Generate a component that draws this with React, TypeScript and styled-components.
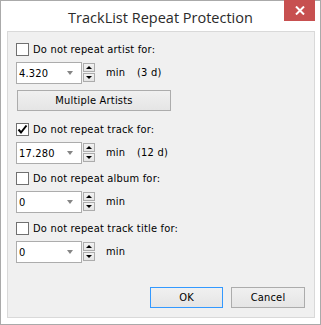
import React from "react";
import styled, { createGlobalStyle } from "styled-components";

const Global = createGlobalStyle`
  html, body { margin: 0; padding: 0; background: #ffffff; }
  * { box-sizing: border-box; }
`;

const UI_FONT = `"DejaVu Sans Condensed", "Liberation Sans", Arial, sans-serif`;

const Window = styled.div`
  width: 321px;
  height: 325px;
  border: 1px solid #aaaaaa;
  background: #ffffff;
  display: flex;
  flex-direction: column;
`;

const TitleBar = styled.div`
  height: 30px;
  display: grid;
  grid-template-columns: 1fr auto 1fr;
  align-items: start;
`;

const Title = styled.div`
  grid-column: 2;
  font-family: "Open Sans", "Noto Sans", sans-serif;
  font-size: 14.5px;
  color: #2b2b2b;
  line-height: 20px;
  padding-top: 7px;
  white-space: nowrap;
`;

const CloseButton = styled.div`
  grid-column: 3;
  justify-self: end;
  margin-top: -1px;
  margin-right: 5px;
  width: 31px;
  height: 21px;
  background: #c75050;
  display: flex;
  align-items: center;
  justify-content: center;
`;

const Client = styled.div`
  margin: 0 5px 6px 6px;
  flex: 1;
  border: 1px solid #d9d9d9;
  background: #f0f0f0;
  display: flex;
  flex-direction: column;
  padding: 11px 0 0 8px;
  font-family: ${UI_FONT};
  font-size: 11px;
  letter-spacing: 0.2px;
  color: #000;
`;

const CheckRow = styled.label<{ $top: number }>`
  display: flex;
  align-items: center;
  height: 13px;
  margin-top: ${(p) => p.$top}px;
  gap: 4px;
  white-space: nowrap;
`;

const Box = styled.span`
  width: 13px;
  height: 13px;
  border: 1px solid #707070;
  background: #ffffff;
  display: flex;
  align-items: center;
  justify-content: center;
  flex: none;
`;

const ValueRow = styled.div`
  display: flex;
  align-items: flex-start;
  margin-top: 6px;
  height: 22px;
`;

const Combo = styled.div`
  width: 66px;
  height: 22px;
  border: 1px solid #acacac;
  background: #ffffff;
  display: flex;
  align-items: center;
  padding-left: 2px;
`;

const ComboText = styled.span`
  flex: 1;
`;

const Arrow = styled.span`
  width: 0;
  height: 0;
  border-left: 3px solid transparent;
  border-right: 3px solid transparent;
  border-top: 4px solid #858585;
  margin-right: 8px;
`;

const Spin = styled.div`
  margin-left: 1px;
  margin-top: 1px;
  display: flex;
  flex-direction: column;
  gap: 1px;
`;

const SpinBtn = styled.div`
  width: 12px;
  height: 9px;
  border: 1px solid #acacac;
  background: linear-gradient(#f2f2f2, #e4e4e4);
  display: flex;
  align-items: center;
  justify-content: center;
`;

const Tri = styled.span<{ $up?: boolean }>`
  width: 0;
  height: 0;
  border-left: 3px solid transparent;
  border-right: 3px solid transparent;
  ${(p) => (p.$up ? "border-bottom: 3px solid #000;" : "border-top: 3px solid #000;")}
`;

const Unit = styled.span`
  margin-left: 11px;
  line-height: 22px;
  width: 31px;
`;

const Extra = styled.span`
  line-height: 22px;
`;

const PushButton = styled.div<{ $default?: boolean; $w: number }>`
  width: ${(p) => p.$w}px;
  height: 21px;
  border: 1px solid ${(p) => (p.$default ? "#3399ff" : "#acacac")};
  background: linear-gradient(#f0f0f0, #e5e5e5);
  display: flex;
  align-items: center;
  justify-content: center;
  white-space: nowrap;
`;

const ArtistsButton = styled.div`
  margin-top: 6px;
  margin-left: 1px;
`;

const Footer = styled.div`
  margin-top: auto;
  margin-bottom: 9px;
  margin-right: 9px;
  display: flex;
  justify-content: flex-end;
  gap: 8px;
`;

function Check({ checked }: { checked?: boolean }) {
  return (
    <Box>
      {checked && (
        <svg width="11" height="11" viewBox="0 0 11 11">
          <path d="M1.5 5.5 L4 8.5 L9.5 1.5" fill="none" stroke="#000" strokeWidth="2" />
        </svg>
      )}
    </Box>
  );
}

function Field({ value, extra }: { value: string; extra?: string }) {
  return (
    <ValueRow>
      <Combo>
        <ComboText>{value}</ComboText>
        <Arrow />
      </Combo>
      <Spin>
        <SpinBtn>
          <Tri $up />
        </SpinBtn>
        <SpinBtn>
          <Tri />
        </SpinBtn>
      </Spin>
      <Unit>min</Unit>
      {extra && <Extra>{extra}</Extra>}
    </ValueRow>
  );
}

export default function App() {
  return (
    <>
      <Global />
      <Window>
        <TitleBar>
          <Title>TrackList Repeat Protection</Title>
          <CloseButton>
            <svg width="10" height="9" viewBox="0 0 10 9">
              <path d="M1 0.5 L9 8.5 M9 0.5 L1 8.5" stroke="#fff" strokeWidth="2" />
            </svg>
          </CloseButton>
        </TitleBar>
        <Client>
          <CheckRow $top={0}>
            <Check />
            Do not repeat artist for:
          </CheckRow>
          <Field value="4.320" extra="(3 d)" />
          <ArtistsButton>
            <PushButton $w={154}>Multiple Artists</PushButton>
          </ArtistsButton>
          <CheckRow $top={12}>
            <Check checked />
            Do not repeat track for:
          </CheckRow>
          <Field value="17.280" extra="(12 d)" />
          <CheckRow $top={8}>
            <Check />
            Do not repeat album for:
          </CheckRow>
          <Field value="0" />
          <CheckRow $top={9}>
            <Check />
            Do not repeat track title for:
          </CheckRow>
          <Field value="0" />
          <Footer>
            <PushButton $default $w={73}>OK</PushButton>
            <PushButton $w={74}>Cancel</PushButton>
          </Footer>
        </Client>
      </Window>
    </>
  );
}
